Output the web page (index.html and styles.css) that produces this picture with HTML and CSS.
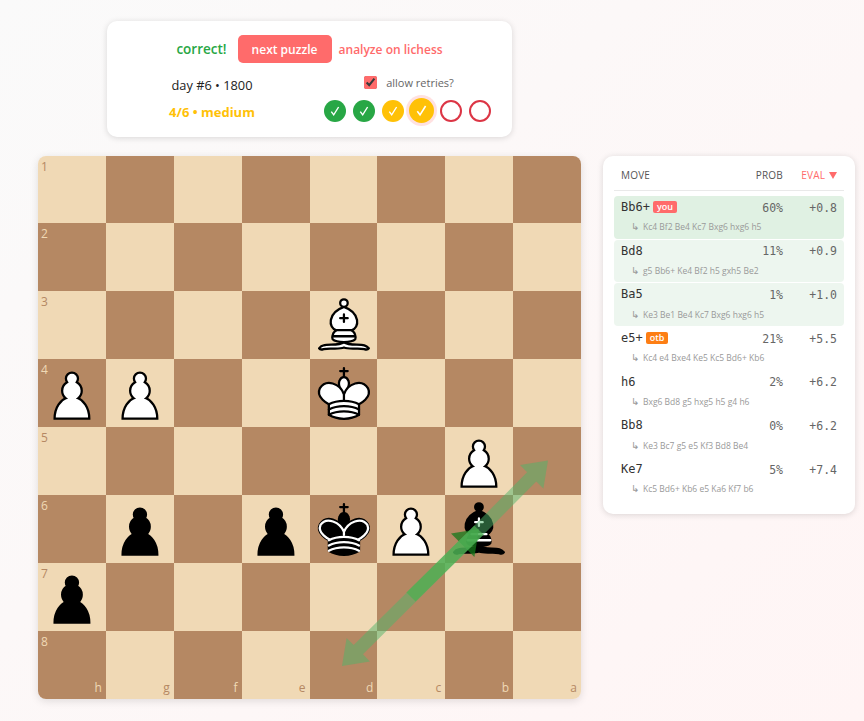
FILE: index.html
```html
<!DOCTYPE html>
<html lang="en">
<head>
    <meta charset="UTF-8">
    <meta name="viewport" content="width=device-width, initial-scale=1.0">
    <title>chess puzzle</title>
    <link rel="stylesheet" href="styles.css">
</head>
<body>
    <svg class="defs" width="0" height="0">
        <defs>
            <symbol id="check" viewBox="0 0 22 22">
                <path d="M7.3 11.6l2.4 3.2L14.6 7" fill="none" stroke="#fff" stroke-width="1.4"/>
            </symbol>
            <symbol id="wp" viewBox="0 0 45 45">
                <path d="M22.5 9c-2.21 0-4 1.79-4 4 0 .89.29 1.71.78 2.38C17.33 16.5 16 18.59 16 21c0 2.03.94 3.84 2.41 5.03-3 1.06-7.41 5.55-7.41 13.47h23c0-7.92-4.41-12.41-7.41-13.47 1.47-1.19 2.41-3 2.41-5.03 0-2.41-1.33-4.5-3.28-5.62.49-.67.78-1.49.78-2.38 0-2.21-1.79-4-4-4z" fill="#fff" stroke="#000" stroke-width="1.5" stroke-linecap="round"/>
            </symbol>
            <symbol id="bp" viewBox="0 0 45 45">
                <path d="M22.5 9c-2.21 0-4 1.79-4 4 0 .89.29 1.71.78 2.38C17.33 16.5 16 18.59 16 21c0 2.03.94 3.84 2.41 5.03-3 1.06-7.41 5.55-7.41 13.47h23c0-7.92-4.41-12.41-7.41-13.47 1.47-1.19 2.41-3 2.41-5.03 0-2.41-1.33-4.5-3.28-5.62.49-.67.78-1.49.78-2.38 0-2.21-1.79-4-4-4z" fill="#000" stroke="#000" stroke-width="1.5" stroke-linecap="round"/>
            </symbol>
            <symbol id="wk" viewBox="0 0 45 45">
                <g fill="none" fill-rule="evenodd" stroke="#000" stroke-width="1.5" stroke-linecap="round" stroke-linejoin="round">
                    <path stroke-linejoin="miter" d="M22.5 11.63V6M20 8h5"/>
                    <path fill="#fff" stroke-linecap="butt" stroke-linejoin="miter" d="M22.5 25s4.5-7.5 3-10.5c0 0-1-2.5-3-2.5s-3 2.5-3 2.5c-1.5 3 3 10.5 3 10.5"/>
                    <path fill="#fff" d="M12.5 37c5.5 3.5 14.5 3.5 20 0v-7s9-4.5 6-10.5c-4-6.5-13.5-3.5-16 4V27v-3.5c-2.5-7.5-12-10.5-16-4-3 6 6 10.5 6 10.5v7"/>
                    <path d="M12.5 30c5.5-3 14.5-3 20 0m-20 3.5c5.5-3 14.5-3 20 0m-20 3.5c5.5-3 14.5-3 20 0"/>
                </g>
            </symbol>
            <symbol id="bk" viewBox="0 0 45 45">
                <g fill="none" fill-rule="evenodd" stroke="#000" stroke-width="1.5" stroke-linecap="round" stroke-linejoin="round">
                    <path stroke-linejoin="miter" d="M22.5 11.63V6"/>
                    <path fill="#000" stroke-linecap="butt" stroke-linejoin="miter" d="M22.5 25s4.5-7.5 3-10.5c0 0-1-2.5-3-2.5s-3 2.5-3 2.5c-1.5 3 3 10.5 3 10.5"/>
                    <path fill="#000" d="M12.5 37c5.5 3.5 14.5 3.5 20 0v-7s9-4.5 6-10.5c-4-6.5-13.5-3.5-16 4V27v-3.5c-2.5-7.5-12-10.5-16-4-3 6 6 10.5 6 10.5v7"/>
                    <path stroke-linejoin="miter" d="M20 8h5"/>
                    <path stroke="#fff" d="M32 29.5s8.5-4 6.03-9.65C34.15 14 25 18 22.5 24.5v2.1-2.1C20 18 10.85 14 6.97 19.85 4.5 25.5 13 29.5 13 29.5"/>
                    <path stroke="#fff" d="M12.5 30c5.5-3 14.5-3 20 0m-20 3.5c5.5-3 14.5-3 20 0m-20 3.5c5.5-3 14.5-3 20 0"/>
                </g>
            </symbol>
            <symbol id="wb" viewBox="0 0 45 45">
                <g fill="none" fill-rule="evenodd" stroke="#000" stroke-width="1.5" stroke-linecap="round" stroke-linejoin="round">
                    <g fill="#fff" stroke-linecap="butt">
                        <path d="M9 36c3.39-.97 10.11.43 13.5-2 3.39 2.43 10.11 1.03 13.5 2 0 0 1.65.54 3 2-.68.97-1.65.99-3 .5-3.39-.97-10.11.46-13.5-1-3.39 1.46-10.11.03-13.5 1-1.354.49-2.323.47-3-.5 1.354-1.94 3-2 3-2z"/>
                        <path d="M15 32c2.5 2.5 12.5 2.5 15 0 .5-1.5 0-2 0-2 0-2.5-2.5-4-2.5-4 5.5-1.5 6-11.5-5-15.5-11 4-10.5 14-5 15.5 0 0-2.5 1.5-2.5 4 0 0-.5.5 0 2z"/>
                        <path d="M25 8a2.5 2.5 0 1 1-5 0 2.5 2.5 0 1 1 5 0z"/>
                    </g>
                    <path stroke-linejoin="miter" d="M17.5 26h10M15 30h15m-7.5-14.5v5M20 18h5"/>
                </g>
            </symbol>
            <symbol id="bb" viewBox="0 0 45 45">
                <g fill="none" fill-rule="evenodd" stroke="#000" stroke-width="1.5" stroke-linecap="round" stroke-linejoin="round">
                    <g fill="#000" stroke-linecap="butt">
                        <path d="M9 36c3.39-.97 10.11.43 13.5-2 3.39 2.43 10.11 1.03 13.5 2 0 0 1.65.54 3 2-.68.97-1.65.99-3 .5-3.39-.97-10.11.46-13.5-1-3.39 1.46-10.11.03-13.5 1-1.354.49-2.323.47-3-.5 1.354-1.94 3-2 3-2z"/>
                        <path d="M15 32c2.5 2.5 12.5 2.5 15 0 .5-1.5 0-2 0-2 0-2.5-2.5-4-2.5-4 5.5-1.5 6-11.5-5-15.5-11 4-10.5 14-5 15.5 0 0-2.5 1.5-2.5 4 0 0-.5.5 0 2z"/>
                        <path d="M25 8a2.5 2.5 0 1 1-5 0 2.5 2.5 0 1 1 5 0z"/>
                    </g>
                    <path stroke="#fff" stroke-linejoin="miter" d="M17.5 26h10M15 30h15m-7.5-14.5v5M20 18h5"/>
                </g>
            </symbol>
        </defs>
    </svg>

    <div class="page">
        <div class="left-col">
            <div class="status-card">
                <div class="status-top">
                    <span class="correct">correct!</span>
                    <button class="next-btn">next puzzle</button>
                    <a class="lichess-link">analyze on lichess</a>
                </div>
                <div class="status-bottom">
                    <div class="puzzle-info">
                        <div class="puzzle-title">day #6 • 1800</div>
                        <div class="puzzle-score">4/6 • medium</div>
                    </div>
                    <div class="progress">
                        <label class="retries"><input type="checkbox" checked> allow retries?</label>
                        <div class="dots">
                            <span class="dot dot-green"><svg class="check"><use href="#check"/></svg></span>
                            <span class="dot dot-green"><svg class="check"><use href="#check"/></svg></span>
                            <span class="dot dot-amber"><svg class="check"><use href="#check"/></svg></span>
                            <span class="dot dot-amber dot-current"><svg class="check"><use href="#check"/></svg></span>
                            <span class="dot dot-empty"></span>
                            <span class="dot dot-empty"></span>
                        </div>
                    </div>
                </div>
            </div>

            <div class="board">
                <div class="sq light"><span class="rank">1</span></div>
                <div class="sq dark"></div>
                <div class="sq light"></div>
                <div class="sq dark"></div>
                <div class="sq light"></div>
                <div class="sq dark"></div>
                <div class="sq light"></div>
                <div class="sq dark"></div>

                <div class="sq dark"><span class="rank">2</span></div>
                <div class="sq light"></div>
                <div class="sq dark"></div>
                <div class="sq light"></div>
                <div class="sq dark"></div>
                <div class="sq light"></div>
                <div class="sq dark"></div>
                <div class="sq light"></div>

                <div class="sq light"><span class="rank">3</span></div>
                <div class="sq dark"></div>
                <div class="sq light"></div>
                <div class="sq dark"></div>
                <div class="sq light"><svg class="piece"><use href="#wb"/></svg></div>
                <div class="sq dark"></div>
                <div class="sq light"></div>
                <div class="sq dark"></div>

                <div class="sq dark"><span class="rank">4</span><svg class="piece"><use href="#wp"/></svg></div>
                <div class="sq light"><svg class="piece"><use href="#wp"/></svg></div>
                <div class="sq dark"></div>
                <div class="sq light"></div>
                <div class="sq dark"><svg class="piece"><use href="#wk"/></svg></div>
                <div class="sq light"></div>
                <div class="sq dark"></div>
                <div class="sq light"></div>

                <div class="sq light"><span class="rank">5</span></div>
                <div class="sq dark"></div>
                <div class="sq light"></div>
                <div class="sq dark"></div>
                <div class="sq light"></div>
                <div class="sq dark"></div>
                <div class="sq light"><svg class="piece"><use href="#wp"/></svg></div>
                <div class="sq dark"></div>

                <div class="sq dark"><span class="rank">6</span></div>
                <div class="sq light"><svg class="piece"><use href="#bp"/></svg></div>
                <div class="sq dark"></div>
                <div class="sq light"><svg class="piece"><use href="#bp"/></svg></div>
                <div class="sq dark"><svg class="piece"><use href="#bk"/></svg></div>
                <div class="sq light"><svg class="piece"><use href="#wp"/></svg></div>
                <div class="sq dark"><svg class="piece"><use href="#bb"/></svg></div>
                <div class="sq light"></div>

                <div class="sq light"><span class="rank">7</span><svg class="piece"><use href="#bp"/></svg></div>
                <div class="sq dark"></div>
                <div class="sq light"></div>
                <div class="sq dark"></div>
                <div class="sq light"></div>
                <div class="sq dark"></div>
                <div class="sq light"></div>
                <div class="sq dark"></div>

                <div class="sq dark"><span class="rank">8</span><span class="file">h</span></div>
                <div class="sq light"><span class="file">g</span></div>
                <div class="sq dark"><span class="file">f</span></div>
                <div class="sq light"><span class="file">e</span></div>
                <div class="sq dark"><span class="file">d</span></div>
                <div class="sq light"><span class="file">c</span></div>
                <div class="sq dark"><span class="file">b</span></div>
                <div class="sq light"><span class="file">a</span></div>

                <svg class="arrows" viewBox="0 0 543 543">
                    <polygon class="arrow-head" points="413,377.6 441,373 436.4,401"/>
                    <polygon class="arrow" points="436.4,369.4 315.7,489.1 308.6,482 304,510 332,505.4 325,498.3 445.6,378.6"/>
                    <polygon class="arrow" points="436.4,369.4 489.1,316.2 482,309.1 510,304.5 505.4,332.5 498.3,325.4 445.6,378.6"/>
                    <polygon class="arrow-played" points="368.4,436.4 436.4,369.4 445.6,378.6 377.6,445.6"/>
                </svg>
            </div>
        </div>

        <div class="moves-card">
            <div class="moves-head">
                <span>MOVE</span>
                <span class="col-prob">PROB</span>
                <span class="col-eval sorted">EVAL <i class="sort-arrow"></i></span>
            </div>

            <div class="move-row played">
                <div class="move-name">Bb6+<span class="tag tag-you">you</span></div>
                <div class="col-prob num">60%</div>
                <div class="col-eval num">+0.8</div>
                <div class="pv"><span class="pv-arrow">↳</span>Kc4 Bf2 Be4 Kc7 Bxg6 hxg6 h5</div>
            </div>
            <div class="move-row good">
                <div class="move-name">Bd8</div>
                <div class="col-prob num">11%</div>
                <div class="col-eval num">+0.9</div>
                <div class="pv"><span class="pv-arrow">↳</span>g5 Bb6+ Ke4 Bf2 h5 gxh5 Be2</div>
            </div>
            <div class="move-row good">
                <div class="move-name">Ba5</div>
                <div class="col-prob num">1%</div>
                <div class="col-eval num">+1.0</div>
                <div class="pv"><span class="pv-arrow">↳</span>Ke3 Be1 Be4 Kc7 Bxg6 hxg6 h5</div>
            </div>
            <div class="move-row">
                <div class="move-name">e5+<span class="tag tag-otb">otb</span></div>
                <div class="col-prob num">21%</div>
                <div class="col-eval num">+5.5</div>
                <div class="pv"><span class="pv-arrow">↳</span>Kc4 e4 Bxe4 Ke5 Kc5 Bd6+ Kb6</div>
            </div>
            <div class="move-row">
                <div class="move-name">h6</div>
                <div class="col-prob num">2%</div>
                <div class="col-eval num">+6.2</div>
                <div class="pv"><span class="pv-arrow">↳</span>Bxg6 Bd8 g5 hxg5 h5 g4 h6</div>
            </div>
            <div class="move-row">
                <div class="move-name">Bb8</div>
                <div class="col-prob num">0%</div>
                <div class="col-eval num">+6.2</div>
                <div class="pv"><span class="pv-arrow">↳</span>Ke3 Bc7 g5 e5 Kf3 Bd8 Be4</div>
            </div>
            <div class="move-row">
                <div class="move-name">Ke7</div>
                <div class="col-prob num">5%</div>
                <div class="col-eval num">+7.4</div>
                <div class="pv"><span class="pv-arrow">↳</span>Kc5 Bd6+ Kb6 e5 Ka6 Kf7 b6</div>
            </div>
        </div>
    </div>
</body>
</html>
```

FILE: styles.css
```css
* {
    box-sizing: border-box;
}

html, body {
    height: 100%;
}

body {
    margin: 0;
    font-family: "Open Sans", "Noto Sans", sans-serif;
    color: #333;
    background: linear-gradient(135deg, #fafafa 0%, #fff5f5 100%);
    overflow: hidden;
}

.defs {
    position: absolute;
}

.page {
    display: flex;
    align-items: flex-start;
    gap: 22px;
    padding: 21px 0 0 38px;
}

.left-col {
    width: 543px;
    display: flex;
    flex-direction: column;
    align-items: center;
    gap: 18.5px;
}

/* top card */
.status-card {
    width: 405px;
    height: 116px;
    background: #fff;
    border-radius: 10px;
    box-shadow: 0 1px 6px rgba(0, 0, 0, 0.14);
    padding: 14px 21px 0 22px;
}

.status-top {
    display: flex;
    align-items: center;
    justify-content: center;
    gap: 7px;
    height: 28px;
    margin-right: 1px;
}

.correct {
    font-size: 13.5px;
    font-weight: 600;
    color: #28a745;
    margin-right: 4px;
}

.next-btn {
    width: 94px;
    height: 28px;
    border: none;
    border-radius: 5px;
    background: #ff6b6b;
    color: #fff;
    font-family: inherit;
    font-size: 12px;
    font-weight: 600;
    cursor: pointer;
}

.lichess-link {
    font-size: 12px;
    font-weight: 600;
    color: #ff6b6b;
}

.status-bottom {
    display: flex;
    justify-content: space-between;
    margin-top: 13px;
}

.puzzle-info {
    width: 166px;
    text-align: center;
}

.puzzle-title {
    font-size: 12.8px;
    font-weight: 500;
    line-height: 18px;
    color: #222;
}

.puzzle-score {
    margin-top: 9px;
    font-size: 13px;
    font-weight: 700;
    line-height: 18px;
    color: #ffc107;
}

.progress {
    display: flex;
    flex-direction: column;
    align-items: center;
    gap: 7px;
}

.retries {
    display: flex;
    align-items: center;
    gap: 9px;
    margin-left: 3px;
    margin-top: -1px;
    margin-bottom: 1px;
    font-size: 11px;
    color: #666;
    height: 15px;
}

.retries input {
    width: 13px;
    height: 13px;
    margin: 0;
    accent-color: #ff6b6b;
}

.dots {
    display: flex;
    align-items: center;
    gap: 7px;
}

.dot {
    width: 22px;
    height: 22px;
    border-radius: 50%;
}

.check {
    display: block;
    width: 100%;
    height: 100%;
}

.dot-green {
    background: #28a745;
}

.dot-amber {
    background: #ffc107;
}

.dot-current {
    width: 25px;
    height: 25px;
    margin: 0 -1px 0 -2px;
    box-shadow: 0 0 0 3px rgba(255, 107, 107, 0.2);
}

.dot-empty {
    border: 2px solid #dc3545;
}

/* board */
.board {
    position: relative;
    width: 543px;
    height: 543px;
    display: grid;
    grid-template-columns: repeat(8, 1fr);
    grid-template-rows: repeat(8, 1fr);
    border-radius: 8px;
    overflow: hidden;
    box-shadow: 0 2px 8px rgba(0, 0, 0, 0.12);
}

.sq {
    position: relative;
}

.light {
    background: #f0d9b5;
    color: #b58863;
}

.dark {
    background: #b58863;
    color: #f0d9b5;
}

.rank {
    position: absolute;
    top: 4px;
    left: 3px;
    font-size: 12px;
    line-height: 14px;
}

.file {
    position: absolute;
    right: 4px;
    bottom: 4px;
    font-size: 12px;
    line-height: 14px;
}

.piece {
    position: absolute;
    top: 0;
    left: 0;
    width: 100%;
    height: 100%;
}

.arrows {
    position: absolute;
    top: 0;
    left: 0;
    width: 100%;
    height: 100%;
}

.arrow {
    fill: #4fb46a;
    opacity: 0.5;
}

.arrow-played {
    fill: #4caf50;
    opacity: 0.7;
}

.arrow-head {
    fill: #15781b;
    opacity: 0.75;
}

/* moves table */
.moves-card {
    width: 252px;
    height: 358px;
    margin-top: 135px;
    padding: 11px 11px 0;
    background: #fff;
    border-radius: 10px;
    box-shadow: 0 1px 6px rgba(0, 0, 0, 0.14);
}

.moves-head,
.move-row {
    display: grid;
    grid-template-columns: 1fr 42px 54px;
    padding: 0 7px;
}

.moves-head {
    height: 24px;
    padding-bottom: 7px;
    align-items: center;
    border-bottom: 1px solid #e9e9e9;
    margin-bottom: 5px;
    font-size: 10px;
    font-weight: 500;
    letter-spacing: 0.2px;
    color: #555;
}

.col-prob,
.col-eval {
    text-align: right;
}

.sorted {
    color: #ff6b6b;
}

.sort-arrow {
    display: inline-block;
    width: 0;
    height: 0;
    margin-left: 1px;
    border-left: 4px solid transparent;
    border-right: 4px solid transparent;
    border-top: 7px solid #ff6b6b;
}

.move-row {
    height: 42.7px;
    margin-bottom: 1px;
    padding-top: 4px;
    border-radius: 4px;
    grid-template-rows: 15px 1fr;
    align-items: center;
}

.played {
    background: #e0f1e3;
}

.good {
    background: #edf6ef;
}

.move-name {
    font-family: "DejaVu Sans Mono", monospace;
    font-size: 12px;
    line-height: 15px;
    color: #333;
}

.num {
    font-family: "DejaVu Sans Mono", monospace;
    font-size: 11.5px;
    color: #666;
}

.tag {
    display: inline-block;
    margin-left: 3px;
    padding: 0 4px;
    height: 12px;
    border-radius: 2px;
    color: #fff;
    font-family: "Open Sans", sans-serif;
    font-size: 9px;
    font-weight: 600;
    line-height: 11px;
    vertical-align: 1px;
}

.tag-you {
    background: #ff6b6b;
}

.tag-otb {
    background: #fd7e14;
}

.pv {
    grid-column: 1 / -1;
    padding-left: 10px;
    font-size: 8.5px;
    color: #999;
}

.pv-arrow {
    display: inline-block;
    width: 12px;
    font-family: "DejaVu Sans", sans-serif;
    font-size: 10px;
}
```
